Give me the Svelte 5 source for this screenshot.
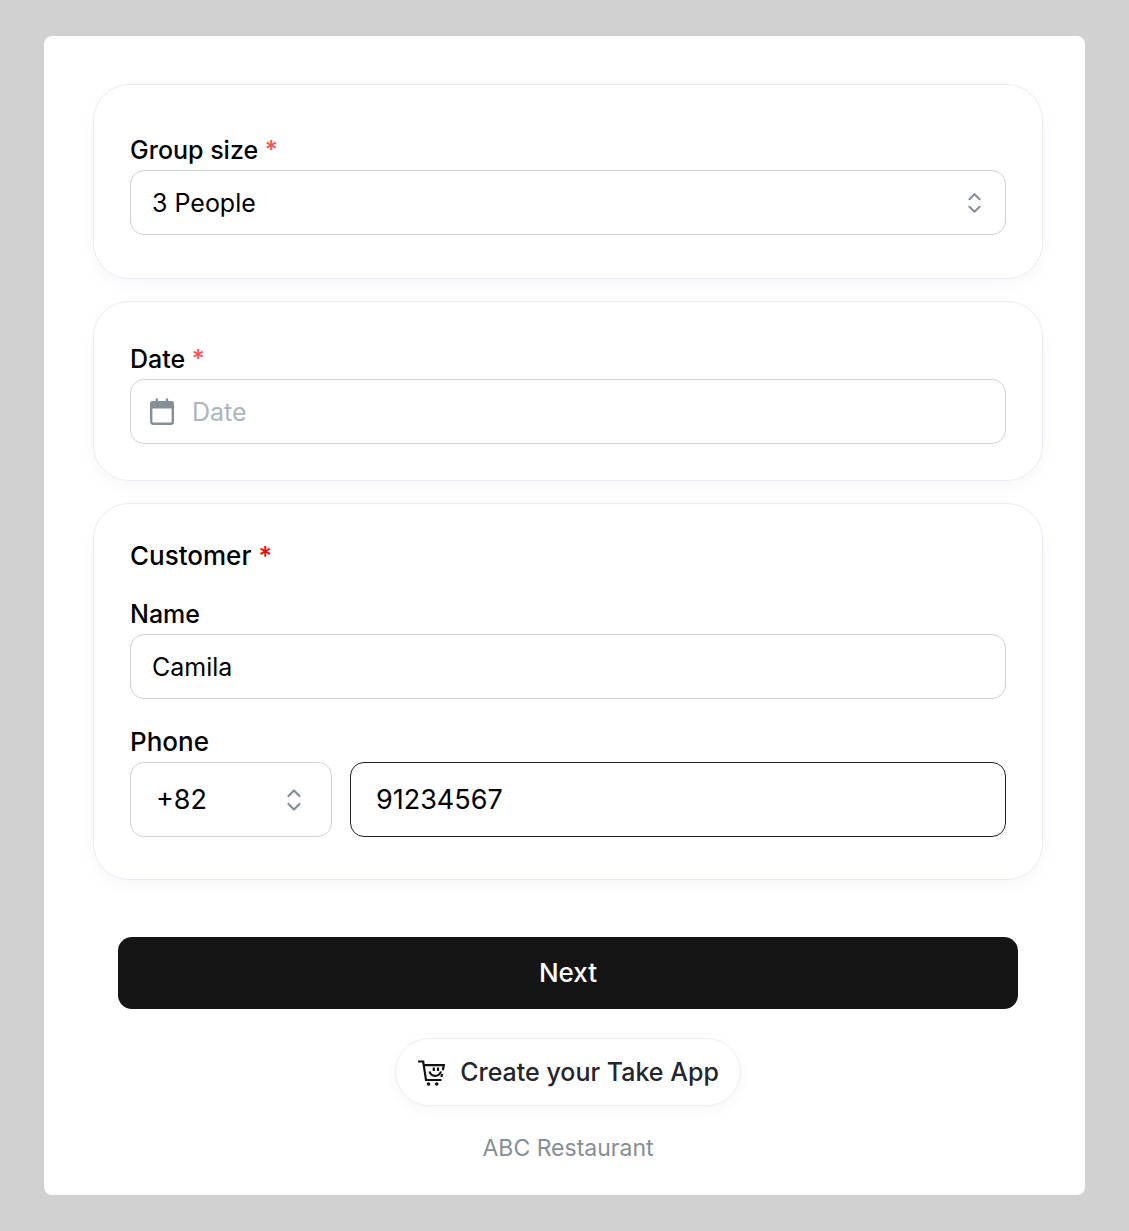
<script>
  const groupSizes = [1, 2, 3, 4, 5, 6, 7, 8]
  const dialCodes = ['+1', '+44', '+65', '+82']

  let groupSize = $state(3)
  let date = $state('')
  let name = $state('Camila')
  let dialCode = $state('+82')
  let phone = $state('91234567')
</script>

{#snippet chevrons()}
  <svg class="chevrons" viewBox="0 0 14 22" aria-hidden="true">
    <path d="M1.5 7 7 1.5 12.5 7M1.5 15 7 20.5l5.5-5.5" />
  </svg>
{/snippet}

<main class="page">
  <form onsubmit={(event) => event.preventDefault()}>
    <section class="card group">
      <label for="group-size">Group size <span class="required">*</span></label>
      <div class="control">
        <select id="group-size" class="field" bind:value={groupSize}>
          {#each groupSizes as size}
            <option value={size}>{size} {size === 1 ? 'Person' : 'People'}</option>
          {/each}
        </select>
        {@render chevrons()}
      </div>
    </section>

    <section class="card date">
      <label for="date">Date <span class="required">*</span></label>
      <div class="control">
        <input id="date" class="field" type="text" placeholder="Date" bind:value={date} />
        <svg class="calendar" viewBox="0 0 24 28" aria-hidden="true">
          <rect x="1.2" y="4.2" width="21.6" height="21.6" rx="2" />
          <path class="bar" d="M0 10.5V6a3 3 0 0 1 3-3h18a3 3 0 0 1 3 3v4.5z" />
          <path d="M6.8 1.5v3M17 1.5v3" />
        </svg>
      </div>
    </section>

    <section class="card customer">
      <h2>Customer <span class="required">*</span></h2>
      <label for="name">Name</label>
      <input id="name" class="field" type="text" bind:value={name} />
      <label class="large" for="phone">Phone</label>
      <div class="phone-row">
        <div class="control">
          <select class="field" aria-label="Country code" bind:value={dialCode}>
            {#each dialCodes as code}
              <option value={code}>{code}</option>
            {/each}
          </select>
          {@render chevrons()}
        </div>
        <input id="phone" class="field active" type="tel" bind:value={phone} />
      </div>
    </section>

    <button class="next" type="submit">Next</button>
  </form>

  <a class="promo" href="#create">
    <svg viewBox="0 0 28 28" aria-hidden="true">
      <path d="M1 3.5h5.2l2.8 18.5h15.5" />
      <path d="M6.5 7.2h20.3l-.9 5M25.2 16l-.9 3" />
      <path d="M12.5 13.5c1.8 5.8 9.4 5.8 11.500 0" />
      <path d="M16.800 9.500v3.500M21 9.500v3.500" />
      <circle cx="11.5" cy="26" r="1.8" />
      <circle cx="19.700" cy="26" r="1.8" />
    </svg>
    Create your Take App
  </a>
  <footer>ABC Restaurant</footer>
</main>

<style>
  :global(body) {
    background: #d1d1d1;
  }
  .page {
    display: flex;
    flex-direction: column;
    align-items: center;
    margin: 36px 44px;
    padding: 48px 42px 32px 49px;
    border-radius: 8px;
    background: #fff;
    color: #000;
    font-family: Inter, 'Liberation Sans', sans-serif;
    font-size: 25px;
    line-height: 30px;
  }
  form {
    display: flex;
    flex-direction: column;
    gap: 22px;
    width: 100%;
  }
  .card {
    display: flex;
    flex-direction: column;
    padding: 42px 36px;
    border: 1px solid #ebebf5;
    border-radius: 36px;
    box-shadow: 0 6px 16px rgba(0, 0, 0, 0.03);
  }
  .group {
    padding-top: 50px;
    padding-bottom: 43px;
  }
  .date {
    padding-bottom: 36px;
  }
  .customer {
    padding-top: 36px;
  }
  h2 {
    margin: 0 0 27px;
    font-size: 26px;
    font-weight: 500;
    line-height: 32px;
  }
  label {
    margin-bottom: 5px;
    font-weight: 500;
  }
  label.large {
    margin-top: 28px;
    font-size: 26px;
  }
  .required {
    color: #fa5252;
  }
  h2 .required {
    color: #f00;
  }
  .control {
    position: relative;
  }
  .field {
    display: block;
    box-sizing: border-box;
    width: 100%;
    height: 65px;
    margin: 0;
    padding: 0 21px;
    border: 1px solid #ced4da;
    border-radius: 14px;
    outline: none;
    background: #fff;
    color: #000;
    font: inherit;
    appearance: none;
  }
  .field.active {
    border-color: #212121;
  }
  .date .field {
    padding-left: 61px;
  }
  .field::placeholder {
    color: #adb5bd;
    opacity: 1;
  }
  .chevrons,
  .calendar {
    position: absolute;
    top: 50%;
    transform: translateY(-50%);
    fill: none;
    stroke: #868e96;
    stroke-width: 2.2;
    stroke-linecap: round;
    stroke-linejoin: round;
    pointer-events: none;
  }
  .chevrons {
    right: 25px;
    width: 13px;
    height: 21px;
  }
  .calendar {
    left: 20px;
    width: 24px;
    height: 28px;
    stroke-width: 2.4;
  }
  .bar {
    fill: #868e96;
    stroke: none;
  }
  .phone-row {
    display: grid;
    grid-template-columns: 202px 1fr;
    gap: 18px;
  }
  .phone-row .field {
    height: 75px;
    padding: 0 25px;
    font-size: 27px;
  }
  .phone-row .chevrons {
    right: 31px;
    width: 14px;
    height: 22px;
  }
  .next {
    height: 72px;
    margin: 35px 25px 0;
    border: 0;
    border-radius: 14px;
    background: #141414;
    color: #fff;
    font: inherit;
    font-size: 26px;
    font-weight: 500;
  }
  .promo {
    display: flex;
    align-items: center;
    gap: 15px;
    margin-top: 29px;
    padding: 18px 21px;
    border: 1px solid #eee;
    border-radius: 34px;
    box-shadow: 0 4px 14px rgba(0, 0, 0, 0.04);
    color: #25262b;
    font-weight: 500;
    text-decoration: none;
  }
  .promo svg {
    width: 28px;
    height: 28px;
    fill: none;
    stroke: #111;
    stroke-width: 2.2;
  }
  .promo circle {
    fill: #111;
    stroke: none;
  }
  footer {
    margin-top: 27px;
    color: #868e96;
    font-size: 23px;
  }
</style>
